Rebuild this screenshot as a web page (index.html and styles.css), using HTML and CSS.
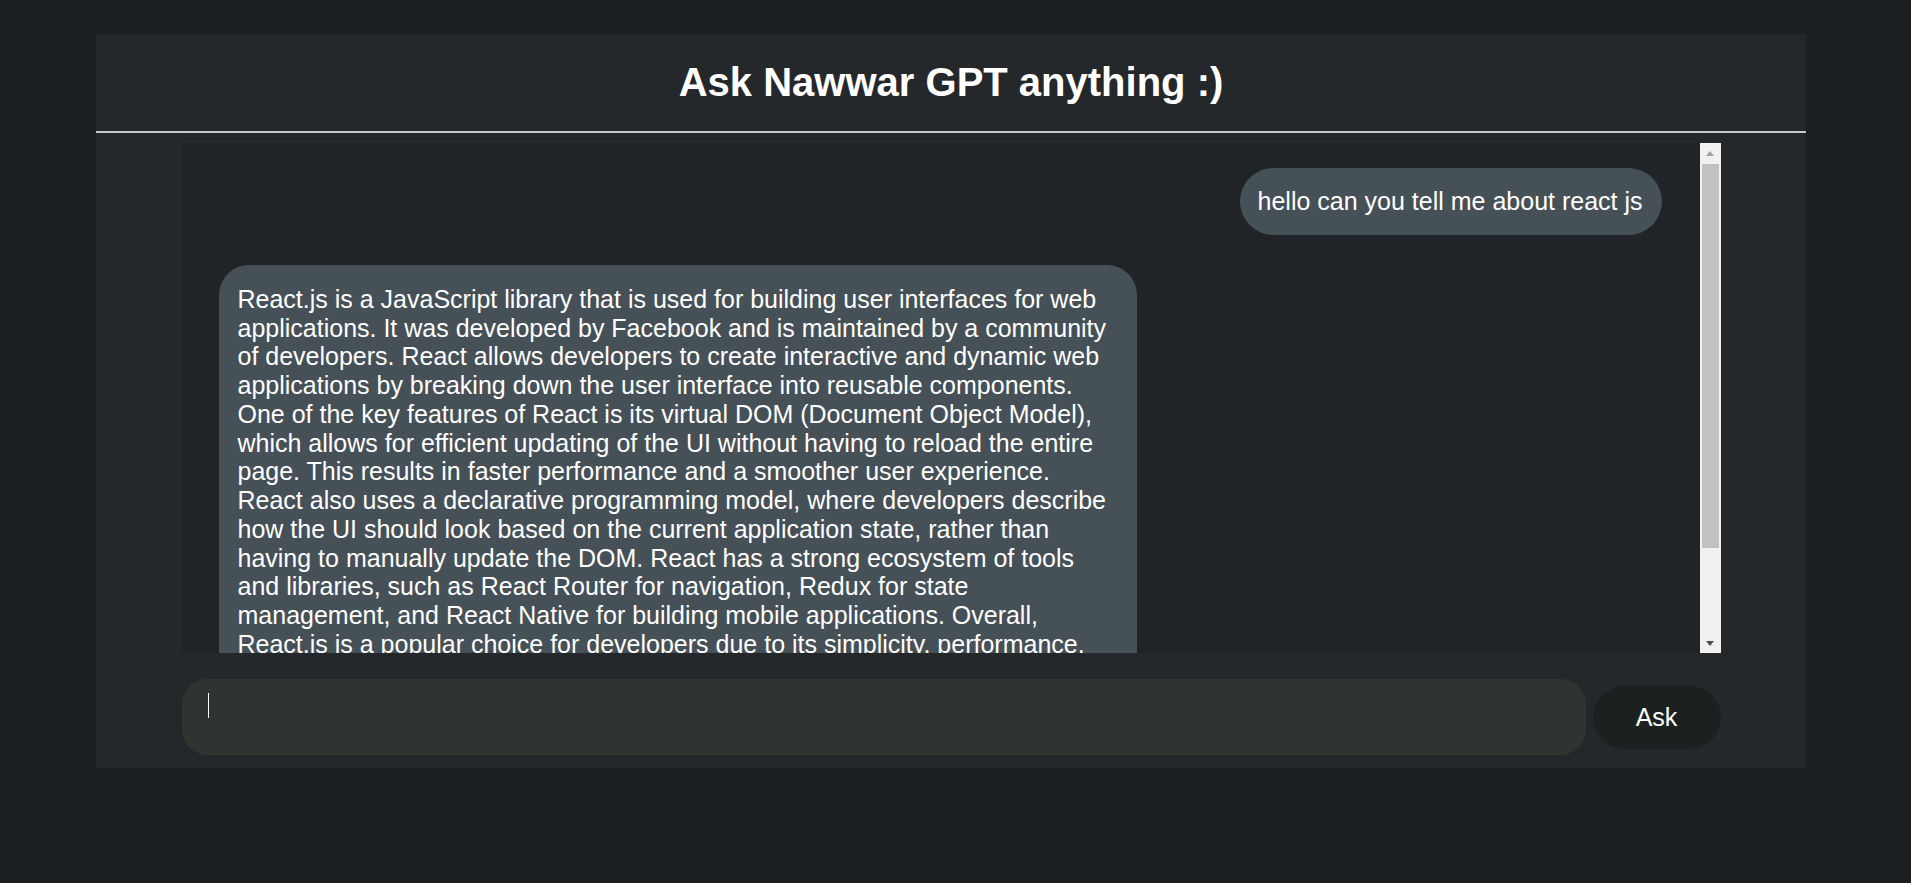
FILE: index.html
```html
<!DOCTYPE html>
<html lang="en">
<head>
<meta charset="utf-8">
<title>Nawwar GPT</title>
<link rel="stylesheet" href="styles.css">
</head>
<body>
<main class="app">
  <header class="app-header">
    <h1 class="title">Ask Nawwar GPT anything :)</h1>
  </header>
  <section class="chat-frame">
    <div class="messages">
      <div class="bubble bubble-user">hello can you tell me about react js</div>
      <div class="bubble bubble-bot">React.js is a JavaScript library that is used for building user interfaces for web applications. It was developed by Facebook and is maintained by a community of developers. React allows developers to create interactive and dynamic web applications by breaking down the user interface into reusable components. One of the key features of React is its virtual DOM (Document Object Model), which allows for efficient updating of the UI without having to reload the entire page. This results in faster performance and a smoother user experience. React also uses a declarative programming model, where developers describe how the UI should look based on the current application state, rather than having to manually update the DOM. React has a strong ecosystem of tools and libraries, such as React Router for navigation, Redux for state management, and React Native for building mobile applications. Overall, React.js is a popular choice for developers due to its simplicity, performance, and flexibility.</div>
    </div>
    <div class="scrollbar">
      <div class="sb-button"><span class="arrow-up"></span></div>
      <div class="sb-track">
        <div class="sb-thumb"></div>
      </div>
      <div class="sb-button"><span class="arrow-down"></span></div>
    </div>
  </section>
  <form class="composer">
    <div class="field"><span class="caret"></span></div>
    <button type="button" class="ask-btn">Ask</button>
  </form>
</main>
</body>
</html>
```

FILE: styles.css
```css
* {
  box-sizing: border-box;
}

html, body {
  margin: 0;
  padding: 0;
}

body {
  background: #1c1f21;
  font-family: "Liberation Sans", Arial, sans-serif;
  color: #ffffff;
  height: 883px;
  overflow: hidden;
}

.app {
  margin: 34px 0 0 96px;
  width: 1710px;
  background: #25282b;
  padding-bottom: 13px;
}

.app-header {
  height: 99px;
  display: flex;
  align-items: center;
  justify-content: center;
  border-bottom: 2px solid #c9c9c9;
}

.title {
  margin: 0 0 1px;
  font-size: 40px;
  font-weight: bold;
  line-height: 46px;
  color: #ffffff;
}

.chat-frame {
  width: 1539px;
  height: 510px;
  margin: 10px auto 0;
  display: flex;
  background: #212426;
}

.messages {
  flex: 1;
  overflow: hidden;
  padding: 25px 38px 0 37px;
  display: flex;
  flex-direction: column;
  align-items: flex-start;
  gap: 30px;
}

.bubble {
  background: #465057;
  color: #ffffff;
  font-size: 25px;
  line-height: 28.75px;
  padding: 19px;
}

.bubble-user {
  align-self: flex-end;
  border-radius: 34px;
  padding: 19px 19px 19px 18px;
}

.bubble-bot {
  max-width: 918px;
  border-radius: 30px;
  flex-shrink: 0;
  padding-top: 20px;
}

.scrollbar {
  width: 21px;
  flex-shrink: 0;
  background: #f1f1f1;
  display: flex;
  flex-direction: column;
}

.sb-button {
  height: 21px;
  display: flex;
  align-items: center;
  justify-content: center;
}

.arrow-up {
  width: 0;
  height: 0;
  border-left: 4.5px solid transparent;
  border-right: 4.5px solid transparent;
  border-bottom: 5px solid #a3a3a3;
}

.arrow-down {
  width: 0;
  height: 0;
  border-left: 4.5px solid transparent;
  border-right: 4.5px solid transparent;
  border-top: 5px solid #505050;
  margin-top: 1px;
}

.sb-track {
  flex: 1;
  padding: 0 2px;
}

.sb-thumb {
  height: 384px;
  background: #c1c1c1;
}

.composer {
  width: 1539px;
  margin: 26px auto 0;
  display: flex;
  align-items: center;
  gap: 7px;
}

.field {
  flex: 1;
  height: 76px;
  background: #2f3430;
  border: 1px solid #3a3431;
  border-radius: 26px;
  padding: 13px 25px;
}

.caret {
  display: block;
  width: 1px;
  height: 25px;
  background: #ffffff;
}

.ask-btn {
  width: 128px;
  height: 63px;
  border: none;
  border-radius: 32px;
  background: #1a2120;
  color: #ffffff;
  font-family: "Liberation Sans", Arial, sans-serif;
  font-size: 25px;
  cursor: pointer;
}
```
